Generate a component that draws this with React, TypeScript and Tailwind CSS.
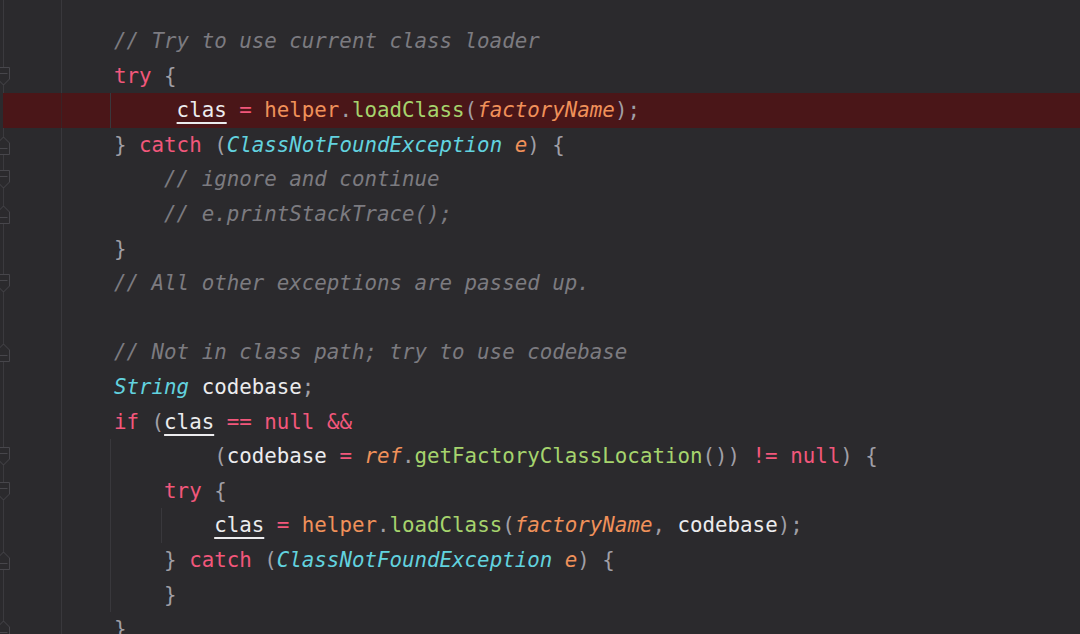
type Tok = [string, string];

const C = {
  cm: "text-[#7c7b80] italic",
  kw: "text-[#f2577b]",
  pn: "text-[#a09fa6]",
  ty: "text-[#62d2df] italic",
  pa: "text-[#f0915a] italic",
  fl: "text-[#f0915a]",
  fn: "text-[#a6d46d]",
  va: "text-[#ececee]",
  ul: "text-[#ececee] underline decoration-[1.5px] underline-offset-[5px]",
};

const lines: Tok[][] = [
  [["// Try to use current class loader", C.cm]],
  [["try", C.kw], [" {", C.pn]],
  [
    ["     ", C.pn],
    ["clas", C.ul],
    [" = ", C.kw],
    ["helper", C.fl],
    [".", C.pn],
    ["loadClass", C.fn],
    ["(", C.pn],
    ["factoryName", C.pa],
    [");", C.pn],
  ],
  [
    ["} ", C.pn],
    ["catch", C.kw],
    [" (", C.pn],
    ["ClassNotFoundException", C.ty],
    [" ", C.pn],
    ["e", C.pa],
    [") {", C.pn],
  ],
  [["    // ignore and continue", C.cm]],
  [["    // e.printStackTrace();", C.cm]],
  [["}", C.pn]],
  [["// All other exceptions are passed up.", C.cm]],
  [],
  [["// Not in class path; try to use codebase", C.cm]],
  [["String", C.ty], [" ", C.pn], ["codebase", C.va], [";", C.pn]],
  [
    ["if", C.kw],
    [" (", C.pn],
    ["clas", C.ul],
    [" == ", C.kw],
    ["null", C.kw],
    [" &&", C.kw],
  ],
  [
    ["        (", C.pn],
    ["codebase", C.va],
    [" = ", C.kw],
    ["ref", C.pa],
    [".", C.pn],
    ["getFactoryClassLocation", C.fn],
    ["()) ", C.pn],
    ["!=", C.kw],
    [" ", C.pn],
    ["null", C.kw],
    [") {", C.pn],
  ],
  [["    ", C.pn], ["try", C.kw], [" {", C.pn]],
  [
    ["        ", C.pn],
    ["clas", C.ul],
    [" = ", C.kw],
    ["helper", C.fl],
    [".", C.pn],
    ["loadClass", C.fn],
    ["(", C.pn],
    ["factoryName", C.pa],
    [", ", C.pn],
    ["codebase", C.va],
    [");", C.pn],
  ],
  [
    ["    } ", C.pn],
    ["catch", C.kw],
    [" (", C.pn],
    ["ClassNotFoundException", C.ty],
    [" ", C.pn],
    ["e", C.pa],
    [") {", C.pn],
  ],
  [["    }", C.pn]],
  [["}", C.pn]],
];

// fold markers per line index: "open" = tip down, "close" = tip up
const folds: Record<number, "open" | "close"> = {
  1: "open",
  3: "close",
  4: "open",
  5: "close",
  7: "open",
  9: "close",
  12: "open",
  13: "open",
  15: "close",
  17: "close",
};

// indent guides: line index -> x offsets inside the row
const guides: Record<number, number[]> = {
  2: [110],
  12: [110],
  13: [110],
  14: [110, 161],
  15: [110],
  16: [110],
};

const FoldMark = ({ kind }: { kind: "open" | "close" }) => (
  <svg
    width="13"
    height="19"
    viewBox="0 0 13 19"
    className={`absolute left-[-3px] top-[8px] ${kind === "close" ? "rotate-180" : ""}`}
  >
    <path
      d="M0.5 0.5 H12.5 V12 L6.5 18 L0.5 12 Z"
      fill="#2b2a2d"
      stroke="#47464b"
      strokeWidth="1"
    />
    <path d="M2.5 6.5 H10.5" stroke="#47464b" strokeWidth="1" />
  </svg>
);

export default function App() {
  return (
    <div className="relative h-[634px] w-[1080px] overflow-hidden bg-[#2b2a2d] pt-[24px] font-['DejaVu_Sans_Mono',monospace] text-[20.8px]">
      <div className="absolute left-[3px] top-0 h-full w-px bg-[#3b3a3e]" />
      <div className="absolute left-[61px] top-0 h-full w-px bg-[#39383c]" />
      {lines.map((toks, i) => (
        <div key={i} className="relative flex h-[34.6px]">
          <div className="w-[3px] shrink-0" />
          <div className={`flex flex-1 ${i === 2 ? "bg-[#4a1618]" : ""}`}>
            <div className="w-[111px] shrink-0" />
            <div className="whitespace-pre leading-[34.6px]">
              {toks.map(([t, c], j) => (
                <span key={j} className={c}>
                  {t}
                </span>
              ))}
            </div>
          </div>
          {(guides[i] || []).map((x) => (
            <div
              key={x}
              className="absolute top-0 h-full w-px bg-[#39383c]"
              style={{ left: x }}
            />
          ))}
          {i === 2 && <div className="absolute left-[61px] top-0 h-full w-px bg-[#3a2225]" />}
          {folds[i] && <FoldMark kind={folds[i]} />}
        </div>
      ))}
    </div>
  );
}
